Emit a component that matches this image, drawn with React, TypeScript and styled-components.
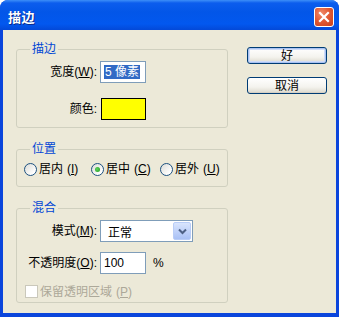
import React from 'react'
import styled, { createGlobalStyle } from 'styled-components'

const GlobalStyle = createGlobalStyle`
  html, body {
    margin: 0;
    padding: 0;
    background: #ffffff;
  }
  * {
    box-sizing: border-box;
  }
`

const FONT = `"Liberation Sans", "Noto Sans CJK SC", sans-serif`

const Window = styled.div`
  width: 339px;
  height: 317px;
  display: flex;
  flex-direction: column;
  background: #0a45dc;
  border-radius: 8px 8px 0 0;
  overflow: hidden;
  font-family: ${FONT};
  font-size: 12px;
  color: #000;
`

const TitleBar = styled.div`
  height: 30px;
  flex: none;
  display: flex;
  align-items: center;
  justify-content: space-between;
  padding: 3px 5px 0 8px;
  background: linear-gradient(
    to bottom,
    #3d8ff8 0%,
    #0c5ded 10%,
    #0356e8 40%,
    #0258ef 80%,
    #0349d8 100%
  );
`

const Title = styled.span`
  color: #fff;
  font-weight: bold;
  font-size: 13px;
  letter-spacing: 0.5px;
  text-shadow: 1px 1px 0 #0b2a8c;
`

const CloseButton = styled.div`
  width: 20px;
  height: 20px;
  border: 1px solid #fff;
  border-radius: 3px;
  background: radial-gradient(circle at 35% 30%, #f08b6a 0%, #e25a35 45%, #c8401c 100%);
  display: flex;
  align-items: center;
  justify-content: center;
`

const Body = styled.div`
  flex: 1;
  margin: 0 3px 4px 3px;
  background: #ece9d8;
  display: flex;
  gap: 19px;
  padding: 12px 9px 0 13px;
`

const LeftColumn = styled.div`
  width: 212px;
  display: flex;
  flex-direction: column;
  gap: 14px;
`

const RightColumn = styled.div`
  flex: 1;
  display: flex;
  flex-direction: column;
  gap: 13px;
  padding-top: 5px;
`

const Group = styled.fieldset`
  margin: 0;
  padding: 0;
  min-width: 0;
  border: 1px solid #d0d0bf;
  border-radius: 3px;
`

const Legend = styled.legend`
  margin-left: 13px;
  padding: 0 2px;
  line-height: 14px;
  height: 14px;
  color: #0046d5;
`

const FormGrid = styled.div<{ $pad: string }>`
  display: grid;
  grid-template-columns: 72px auto;
  column-gap: 3px;
  align-items: center;
  padding: ${(p) => p.$pad};
`

const Label = styled.span`
  text-align: right;
  white-space: nowrap;
  line-height: 14px;
`

const Spacer = styled.div<{ $h: number }>`
  grid-column: 1 / -1;
  height: ${(p) => p.$h}px;
`

const TextBox = styled.div<{ $w: number }>`
  width: ${(p) => p.$w}px;
  height: 22px;
  background: #fff;
  border: 1px solid #7f9db9;
  display: flex;
  align-items: center;
  padding: 0 3px;
  line-height: 14px;
`

const Selected = styled.span`
  background: #316ac5;
  color: #fff;
  padding: 0 1px;
`

const Swatch = styled.div`
  width: 45px;
  height: 22px;
  margin-left: 1px;
  background: #ffff00;
  border: 1px solid #000;
`

const Select = styled.div`
  width: 93px;
  height: 22px;
  background: #fff;
  border: 1px solid #7f9db9;
  display: flex;
  align-items: center;
  justify-content: space-between;
  padding: 1px 1px 1px 7px;
`

const DropButton = styled.div`
  width: 18px;
  height: 18px;
  border: 1px solid #b9cdf7;
  border-radius: 2px;
  background: linear-gradient(to bottom, #d9e5fd 0%, #bccff9 60%, #a9c1f5 100%);
  display: flex;
  align-items: center;
  justify-content: center;
`

const InputWrap = styled.div`
  display: flex;
  align-items: center;
  gap: 7px;
`

const RadioRow = styled.div`
  display: grid;
  grid-template-columns: 67px 69px auto;
  align-items: center;
  height: 14px;
  padding: 6px 0 10px 7px;
  box-sizing: content-box;
`

const RadioItem = styled.label`
  display: flex;
  align-items: center;
  gap: 2px;
  white-space: nowrap;
  line-height: 14px;
`

const RadioCircle = styled.span<{ $checked?: boolean }>`
  width: 13px;
  height: 13px;
  flex: none;
  border-radius: 50%;
  border: 1px solid #1c5180;
  background: linear-gradient(135deg, #dcdcd6 0%, #fff 80%);
  display: flex;
  align-items: center;
  justify-content: center;
  &::after {
    content: '';
    display: ${(p) => (p.$checked ? 'block' : 'none')};
    width: 5px;
    height: 5px;
    border-radius: 50%;
    background: radial-gradient(circle at 40% 40%, #5fd35f 0%, #1d9a1d 100%);
  }
`

const Key = styled.span`
  margin-left: 2px;
`

const CheckRow = styled.div`
  grid-column: 1 / -1;
  display: flex;
  align-items: center;
  gap: 2px;
  height: 13px;
  color: #aca899;
  line-height: 14px;
`

const CheckBox = styled.span`
  width: 13px;
  height: 13px;
  border: 1px solid #cac8bb;
  background: #fff;
`

const Button = styled.div<{ $default?: boolean }>`
  width: 80px;
  height: 17px;
  border: 1px solid #003c74;
  border-radius: 3px;
  background: linear-gradient(to bottom, #ffffff 0%, #f4f3ee 60%, #dcd9cd 100%);
  box-shadow: ${(p) =>
    p.$default ? 'inset 0 0 0 1px #a9c2f2, inset 0 0 0 2px #cfdcf8' : 'inset 0 -1px 0 #d6d0c5'};
  display: flex;
  align-items: center;
  justify-content: center;
  line-height: 14px;
`

const Ul = styled.u`
  text-underline-offset: 1px;
`

export default function App() {
  return (
    <>
      <GlobalStyle />
      <Window>
        <TitleBar>
          <Title>描边</Title>
          <CloseButton>
            <svg width="12" height="12" viewBox="0 0 12 12">
              <path d="M2 2 L10 10 M10 2 L2 10" stroke="#fff" strokeWidth="2.2" strokeLinecap="square" />
            </svg>
          </CloseButton>
        </TitleBar>
        <Body>
          <LeftColumn>
            <Group>
              <Legend>描边</Legend>
              <FormGrid $pad="5px 0 7px 8px">
                <Label>
                  宽度(<Ul>W</Ul>):
                </Label>
                <TextBox $w={46}>
                  <Selected>5 像素</Selected>
                </TextBox>
                <Spacer $h={15} />
                <Label>颜色:</Label>
                <Swatch />
              </FormGrid>
            </Group>

            <Group>
              <Legend>位置</Legend>
              <RadioRow>
                <RadioItem>
                  <RadioCircle />
                  居内<Key>(<Ul>I</Ul>)</Key>
                </RadioItem>
                <RadioItem>
                  <RadioCircle $checked />
                  居中<Key>(<Ul>C</Ul>)</Key>
                </RadioItem>
                <RadioItem>
                  <RadioCircle />
                  居外<Key>(<Ul>U</Ul>)</Key>
                </RadioItem>
              </RadioRow>
            </Group>

            <Group>
              <Legend>混合</Legend>
              <FormGrid $pad="5px 0 4px 8px">
                <Label>
                  模式(<Ul>M</Ul>):
                </Label>
                <Select>
                  <span>正常</span>
                  <DropButton>
                    <svg width="9" height="7" viewBox="0 0 9 7">
                      <path d="M1 1.5 L4.5 5 L8 1.5" fill="none" stroke="#4d6185" strokeWidth="2" />
                    </svg>
                  </DropButton>
                </Select>
                <Spacer $h={10} />
                <Label>
                  不透明度(<Ul>O</Ul>):
                </Label>
                <InputWrap>
                  <TextBox $w={46}>100</TextBox>
                  <span>%</span>
                </InputWrap>
                <Spacer $h={11} />
                <CheckRow>
                  <CheckBox />
                  保留透明区域<Key>(<Ul>P</Ul>)</Key>
                </CheckRow>
              </FormGrid>
            </Group>
          </LeftColumn>

          <RightColumn>
            <Button $default>好</Button>
            <Button>取消</Button>
          </RightColumn>
        </Body>
      </Window>
    </>
  )
}
